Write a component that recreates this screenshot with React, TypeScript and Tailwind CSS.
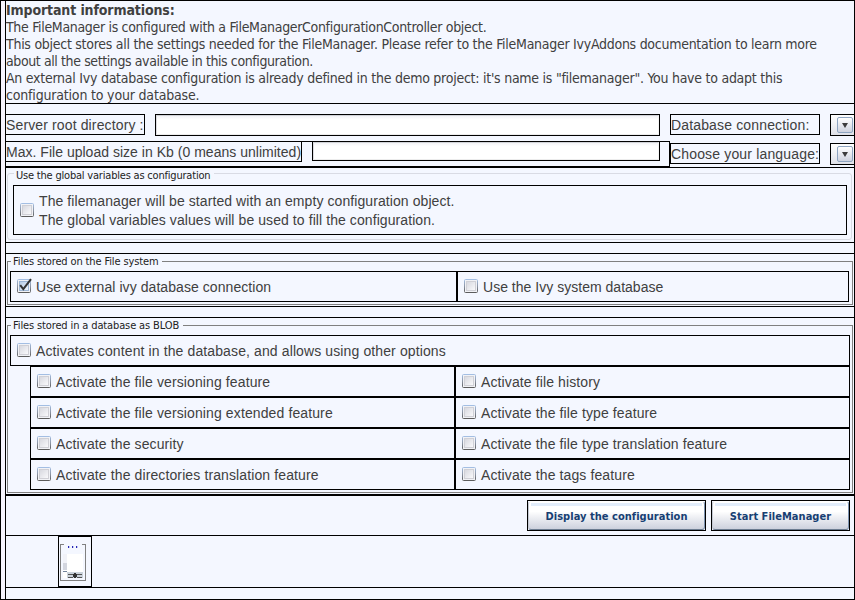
import type { ReactNode } from 'react';

const TAHOMA = "font-['DejaVu_Sans_Condensed','DejaVu_Sans',sans-serif]";
const ARIAL = "font-['Liberation_Sans',Arial,sans-serif]";

function Check({ checked = false }: { checked?: boolean }) {
  return (
    <svg className="block shrink-0" width="16" height="16" viewBox="0 0 16 16">
      <defs>
        <linearGradient id="face" x1="0" y1="0" x2="1" y2="1">
          <stop offset="0" stopColor="#d6d7de" />
          <stop offset="1" stopColor="#fbfbfd" />
        </linearGradient>
        <linearGradient id="faceOn" x1="0" y1="0" x2="1" y2="1">
          <stop offset="0" stopColor="#b3c9e4" />
          <stop offset="1" stopColor="#f2f7fd" />
        </linearGradient>
        <linearGradient id="edge" x1="0" y1="0" x2="0" y2="1">
          <stop offset="0" stopColor="#a3bee3" />
          <stop offset="0.5" stopColor="#8d96a6" />
          <stop offset="1" stopColor="#5c5c5c" />
        </linearGradient>
      </defs>
      <rect x="0.5" y="1.5" width="13" height="13" rx="1" fill="#f1f2f6" stroke="url(#edge)" />
      <rect x="2.5" y="3.5" width="9" height="9" fill={checked ? 'url(#faceOn)' : 'url(#face)'} stroke={checked ? '#9db6d6' : '#d0d0d6'} />
      {checked && <path d="M3.2 7.2 L6.3 11.2 L14 1.2" fill="none" stroke="#333" strokeWidth="2" />}
    </svg>
  );
}

function Option({ label, checked, className = '', text = 'tracking-[0.115px]' }: { label: string; checked?: boolean; className?: string; text?: string }) {
  return (
    <label className={`flex border border-black pl-[6px] pt-[6px] ${className}`}>
      <Check checked={checked} />
      <span className={`ml-[3px] mt-px whitespace-nowrap text-[14px] leading-[17px] ${ARIAL} ${text}`}>{label}</span>
    </label>
  );
}

function Legend({ children, className }: { children: ReactNode; className: string }) {
  return (
    <div className={`absolute h-[14px] whitespace-nowrap bg-[#f4f7ff] text-[11px] leading-[13px] text-[#222] ${TAHOMA} ${className}`}>
      {children}
    </div>
  );
}

function FieldLabel({ children, className }: { children: ReactNode; className: string }) {
  return (
    <div className={`h-[21px] shrink-0 whitespace-nowrap border border-black text-[14px] leading-[20px] ${ARIAL} ${className}`}>{children}</div>
  );
}

function Field({ className }: { className: string }) {
  return (
    <div className={`shrink-0 border border-black ${className}`}>
      <div className="h-full border border-b-[#ececec] border-l-[#dddde2] border-r-[#f4f4f4] border-t-[#d0d2d7] bg-linear-to-b from-[#f3f3f6] to-white to-20%" />
    </div>
  );
}

function Combo() {
  return (
    <div className="flex h-[22px] w-[25px] shrink-0 border border-r-0 border-black bg-linear-to-b from-white to-[#dfe1e8] pl-[6px] pt-[2px]">
      <div className="flex h-[16px] w-[16px] items-center justify-center rounded-[2px] border border-[#8fa5c1] bg-linear-to-b from-white to-[#cfd3df]">
        <svg width="6" height="5" viewBox="0 0 6 5">
          <path d="M0 0H6L3 5Z" fill="#3c3c3c" />
        </svg>
      </div>
    </div>
  );
}

function Button({ children, className }: { children: string; className: string }) {
  return (
    <button className={`h-[31px] border border-black ${className}`}>
      <div className="flex h-full flex-col rounded-[3px] border border-b-[#6c7c90] border-l-[#c5cad4] border-r-[#7d93b0] border-t-white bg-linear-to-b from-white from-35% to-[#cdd1dd]">
        <div className="mx-[2px] mt-px h-[3px] shrink-0 bg-[#e2edfb]" />
        <span className={`mt-[4px] whitespace-nowrap text-center text-[11px] font-bold leading-[14px] tracking-[0.03px] text-[#173f73] ${TAHOMA}`}>{children}</span>
      </div>
    </button>
  );
}

export default function App() {
  return (
    <div className="h-[600px] w-[855px] overflow-hidden border border-black bg-[#f7f5ff] pl-[4px] text-[#404040]">
      <div className="flex h-[598px] w-[849px] flex-col border-l border-black bg-[#f4f7ff]">
        <div className={`h-[103px] shrink-0 whitespace-nowrap border-b border-black pt-px text-[14px] leading-[17px] ${TAHOMA}`}>
          <p className="font-bold tracking-[-0.12px]">Important informations:</p>
          <p className="tracking-[-0.32px]">The FileManager is configured with a FileManagerConfigurationController object.</p>
          <p className="tracking-[-0.27px]">This object stores all the settings needed for the FileManager. Please refer to the FileManager IvyAddons documentation to learn more</p>
          <p className="tracking-[-0.4px]">about all the settings available in this configuration.</p>
          <p className="tracking-[-0.256px]">An external Ivy database configuration is already defined in the demo project: it's name is "filemanager". You have to adapt this</p>
          <p className="tracking-[-0.18px]">configuration to your database.</p>
        </div>

        <div className="flex h-[64px] shrink-0 border-b border-black">
          <div className="-ml-px w-[665px] shrink-0 pt-[10px]">
            <div className="flex h-[22px] gap-[10px]">
              <FieldLabel className="w-[140px] tracking-[0.13px]">Server root directory :</FieldLabel>
              <Field className="h-[22px] w-[505px]" />
            </div>
            <div className="mt-[5px] flex h-[26px] gap-[10px] border border-black">
              <FieldLabel className="-ml-px -mt-px w-[297px] tracking-[0.02px]">Max. File upload size in Kb (0 means unlimited)</FieldLabel>
              <Field className="-mt-px h-[20px] w-[348px]" />
            </div>
          </div>
          <div className="flex flex-col gap-[7px] pt-[10px]">
            <div className="flex h-[22px] gap-[10px]">
              <FieldLabel className="w-[150px] tracking-[0.15px]">Database connection:</FieldLabel>
              <Combo />
            </div>
            <div className="flex h-[22px] gap-[10px]">
              <FieldLabel className="w-[150px] tracking-[0.16px]">Choose your language:</FieldLabel>
              <Combo />
            </div>
          </div>
        </div>

        <div className="h-[75px] shrink-0 border-b border-black pl-px pt-[5px]">
          <div className="relative h-[67px] w-[845px] rounded-[3px] border border-[#d9dbe4] pl-[5px] pt-[11px]">
            <Legend className="left-[6px] top-[-5px] px-[2px] pr-[4px] tracking-[-0.2px]">Use the global variables as configuration</Legend>
            <label className="flex h-[50px] w-[834px] items-center border border-black pl-[6px]">
              <Check />
              <span className={`ml-[3px] mt-[2px] whitespace-nowrap text-[14px] leading-[19px] tracking-[0.08px] ${ARIAL}`}>
                The filemanager will be started with an empty configuration object.
                <br />
                The global variables values will be used to fill the configuration.
              </span>
            </label>
          </div>
        </div>
        <div className="h-[11px] shrink-0 border-b border-black" />

        <div className="h-[53px] shrink-0 border-b border-black pl-px pt-[7px]">
          <div className="relative h-[44px] w-[846px] border border-[#808080] pl-[2px] pt-[9px]">
            <Legend className="left-[3px] top-[-7px] px-[2px] pr-[4px] tracking-[-0.13px]">Files stored on the File system</Legend>
            <div className="flex">
              <Option className="h-[31px] w-[447px]" text="tracking-[0.07px]" label="Use external ivy database connection" checked />
              <Option className="h-[31px] w-[392px]" text="tracking-[0.02px]" label="Use the Ivy system database" />
            </div>
          </div>
        </div>
        <div className="h-[11px] shrink-0 border-b border-black" />

        <div className="h-[178px] shrink-0 border-b-2 border-black pl-px pt-[7px]">
          <div className="relative h-[168px] w-[846px] border border-[#808080] pl-[2px] pt-[9px]">
            <Legend className="left-[3px] top-[-7px] px-[2px] pr-[4px] tracking-[-0.13px]">Files stored in a database as BLOB</Legend>
            <Option className="h-[31px] w-[840px]" label="Activates content in the database, and allows using other options" />
            <div className="ml-[20px] grid auto-rows-[31px] grid-cols-[425px_395px]">
              <Option label="Activate the file versioning feature" />
              <Option label="Activate file history" />
              <Option label="Activate the file versioning extended feature" />
              <Option label="Activate the file type feature" />
              <Option label="Activate the security" />
              <Option label="Activate the file type translation feature" />
              <Option label="Activate the directories translation feature" />
              <Option label="Activate the tags feature" />
            </div>
          </div>
        </div>

        <div className="flex h-[40px] shrink-0 justify-end gap-[5px] border-b border-black pr-[4px] pt-[4px]">
          <Button className="w-[179px]">Display the configuration</Button>
          <Button className="w-[139px]">Start FileManager</Button>
        </div>

        <div className="h-[52px] shrink-0 border-b border-black pl-[52px]">
          <div className="h-[51px] w-[34px] border border-black">
            <svg width="32" height="49" viewBox="0 0 32 49" shapeRendering="crispEdges">
              <path d="M5 7.5H1.5V43.5H26.5V7.5H23" fill="none" stroke="#808080" />
              <path d="M10 9h1v2h-1zM14 9h1v2h-1zM18 9h1v2h-1z" fill="#c4c8f0" />
              <path d="M9 9h1v2H9zM13 9h1v2h-1zM17 9h1v2h-1z" fill="#2626b4" />
              <rect x="4" y="17" width="20" height="24" fill="#fff" />
              <rect x="4" y="17" width="4" height="9" fill="#f1f2f8" />
              <rect x="4" y="26" width="4" height="7" fill="#d3d6df" />
              <rect x="4" y="34" width="4" height="1" fill="#71839b" />
              <rect x="8" y="35" width="16" height="6" fill="#cbd3dc" />
              <path d="M9 37.5h5M18 37.5h5M9 40.5h5M18 40.5h5" stroke="#555" />
              <path d="M14 37h4v3h-4zM15 36h2v5h-2z" fill="#333" />
            </svg>
          </div>
        </div>
      </div>
    </div>
  );
}
